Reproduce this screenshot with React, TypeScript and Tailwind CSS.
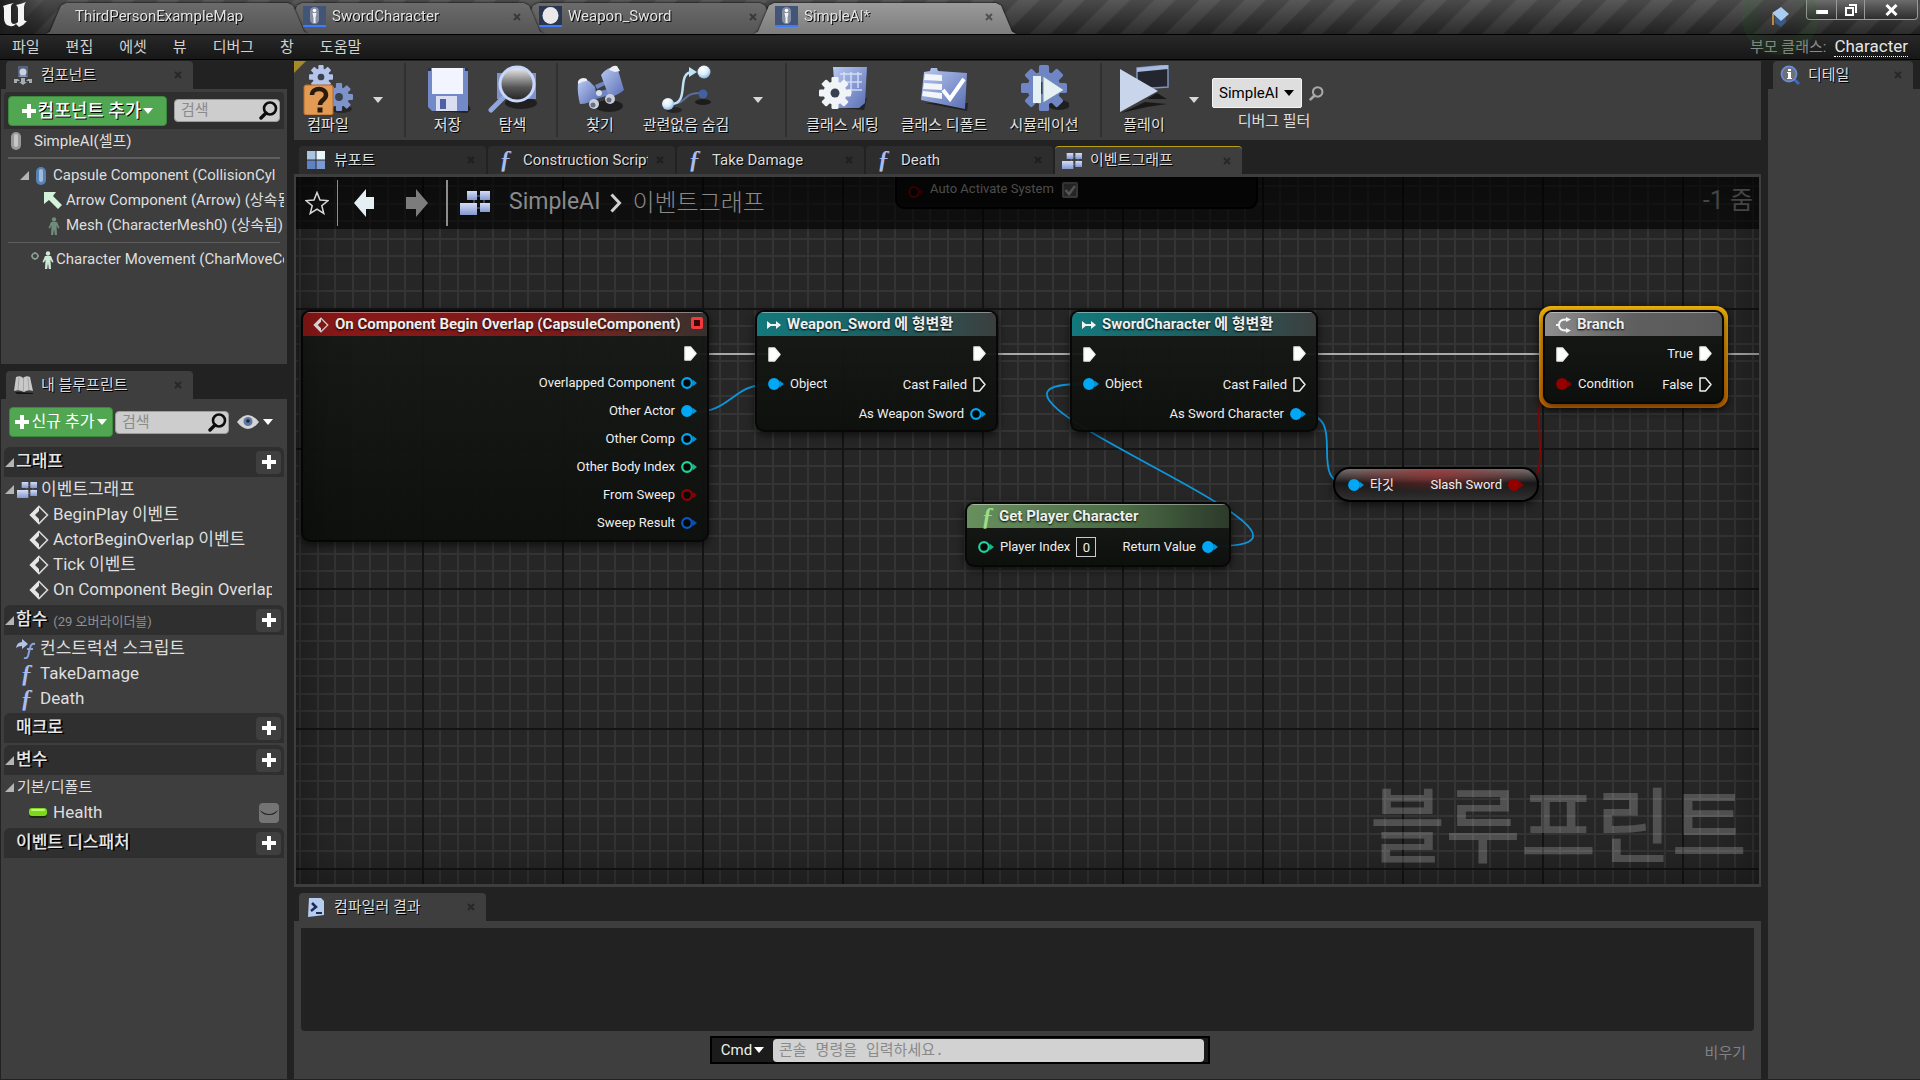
import React from 'react';

type PinKind = 'exec' | 'object' | 'int' | 'bool' | 'struct';

interface PinData {
  label?: string;
  kind: PinKind;
  linked?: boolean;
}

const pinColors: Record<PinKind, string> = {
  exec: '#ffffff',
  object: '#00a8f6',
  int: '#1fd19b',
  bool: '#940000',
  struct: '#0a58c8',
};

/* ---------- small glyphs ---------- */

const CloseMark = () => (
  <svg width="8" height="8" viewBox="0 0 8 8" className="shrink-0">
    <path d="M1 1l6 6M7 1L1 7" stroke="#101010" strokeOpacity="0.5" strokeWidth="1.800" />
  </svg>
);

const Caret = ({ color = '#d8d8d8', size = 10 }: { color?: string; size?: number }) => (
  <svg width={size} height={size * 0.6} viewBox="0 0 10 6" className="shrink-0">
    <path d="M0 0h10L5 6z" fill={color} />
  </svg>
);

const TreeArrow = () => (
  <svg width="9" height="9" viewBox="0 0 9 9" className="shrink-0">
    <path d="M9 0v9H0z" fill="#b4b4b4" />
  </svg>
);

const Plus = ({ size = 14 }: { size?: number }) => (
  <svg width={size} height={size} viewBox="0 0 14 14" className="shrink-0">
    <path d="M5 0h4v5h5v4H9v5H5V9H0V5h5z" fill="#fff" />
  </svg>
);

const Magnifier = ({ color = '#0d0d0d', size = 19 }: { color?: string; size?: number }) => (
  <svg width={size} height={size} viewBox="0 0 19 19" className="shrink-0">
    <circle cx="11" cy="7.5" r="6" fill="none" stroke={color} strokeWidth="2.6" />
    <path d="M7 12l-5 5" stroke={color} strokeWidth="3.4" strokeLinecap="round" />
  </svg>
);

const FuncGlyph = ({ className = 'text-[#a9bdf2]' }: { className?: string }) => (
  <span
    aria-hidden="true"
    className={`w-5 shrink-0 text-center font-['Liberation_Serif',serif] text-[25px] leading-5 italic [text-shadow:1px_0_0_currentColor] ${className}`}
  >
    ƒ
  </span>
);

const GraphGlyph = ({ width = 20 }: { width?: number }) => (
  <svg width={width} height={width * 0.8} viewBox="0 0 30 24" className="shrink-0">
    <defs>
      <linearGradient id="graphFill" x1="0" y1="0" x2="0" y2="1">
        <stop offset="0" stopColor="#d5ddf6" />
        <stop offset="1" stopColor="#8497cf" />
      </linearGradient>
    </defs>
    <path d="M17 5h3M24 9v4M14 9v3M16 17h4" stroke="#6f7894" />
    <rect x="7" y="0" width="10" height="9" fill="url(#graphFill)" />
    <rect x="20" y="0" width="10" height="9" fill="url(#graphFill)" />
    <rect x="0" y="12" width="17" height="12" fill="url(#graphFill)" />
    <rect x="20" y="12" width="10" height="9" fill="url(#graphFill)" />
  </svg>
);

const EventGlyph = ({ size = 20 }: { size?: number }) => (
  <svg width={size} height={size} viewBox="0 0 20 20" className="shrink-0">
    <path d="M10 1.5l8.5 8.5-8.5 8.5L1.5 10z" fill="none" stroke="#d6d6d6" strokeWidth="1.6" />
    <path d="M10 1v5l-4 4 4 4v5L1 10z" fill="#e6e6e6" />
  </svg>
);

const CapsuleGlyph = ({ color = '#b9b9b9' }: { color?: string }) => (
  <svg width="12" height="20" viewBox="0 0 12 20" className="shrink-0">
    <rect x="1" y="1" width="10" height="18" rx="5" fill={color} fillOpacity="0.75" />
    <rect x="4" y="3" width="4" height="13" rx="2" fill="#fff" fillOpacity="0.45" />
  </svg>
);

const PersonGlyph = ({ color }: { color: string }) => (
  <svg width="12" height="18" viewBox="0 0 12 18" className="shrink-0">
    <circle cx="6" cy="2.5" r="2.2" fill={color} />
    <path d="M3 5h6l2.5 6-1.4.6L8.5 8.5 9 18H6.8L6 12l-.8 6H3l.5-9.5-1.6 3.1L.5 11z" fill={color} />
  </svg>
);

const AssetBadge = ({ round = false }: { round?: boolean }) => (
  <svg width="23" height="21" viewBox="0 0 23 21" className="shrink-0">
    <rect width="23" height="19" fill={round ? '#2a3550' : '#435577'} />
    <rect y="19" width="23" height="2" fill="#3d7bff" />
    {round ? (
      <ellipse cx="11.5" cy="9.5" rx="8" ry="8.5" fill="#e9e9e9" />
    ) : (
      <>
        <rect x="7" y="1" width="9" height="17" rx="4.5" fill="#8790a2" />
        <circle cx="11.5" cy="4.5" r="1.8" fill="#fff" />
        <path d="M9.500 7h4l-1 5v5h-2v-5z" fill="#f2f2f2" />
      </>
    )}
  </svg>
);

const Gear = ({ cx, cy, r, fill }: { cx: number; cy: number; r: number; fill: string }) => (
  <g transform={`translate(${cx} ${cy}) scale(${r / 10})`}>
    {[0, 45, 90, 135].map((a) => (
      <rect key={a} x="-2.2" y="-10" width="4.4" height="20" rx="0.8" fill={fill} transform={`rotate(${a})`} />
    ))}
    <circle r="7.2" fill={fill} />
    <circle r="2.8" fill="#39414f" />
  </g>
);

/* ---------- toolbar drawings ---------- */

const BlueFill = ({ id }: { id: string }) => (
  <defs>
    <linearGradient id={id} x1="0" y1="0" x2="1" y2="1">
      <stop offset="0" stopColor="#b9c9f3" />
      <stop offset="1" stopColor="#5a6fb4" />
    </linearGradient>
  </defs>
);

const CompileIcon = () => (
  <svg width="50" height="50" viewBox="0 0 50 50">
    <ellipse cx="38" cy="44" rx="11" ry="4" fill="#000" fillOpacity="0.4" />
    <Gear cx={18} cy={12} r={12} fill="#b4c4ea" />
    <Gear cx={36} cy={32} r={14} fill="#7f93cb" />
    <rect x="1" y="20" width="29" height="30" rx="2" fill="#e39a55" />
    <rect x="1" y="20" width="29" height="30" rx="2" fill="none" stroke="#b06a28" />
    <path d="M9 30c0-8 14-8 14 0 0 5-6 5-6 10" fill="none" stroke="#2a1a0c" strokeWidth="4.5" />
    <rect x="14.5" y="42.500" width="5" height="5" fill="#2a1a0c" />
  </svg>
);

const SaveIcon = () => (
  <svg width="50" height="50" viewBox="0 0 50 50">
    <path d="M8 46l36 2 4-4-4-6z" fill="#000" fillOpacity="0.45" />
    <path d="M5 3h40v43H9l-4-4z" fill="#7489c8" />
    <rect x="9" y="3" width="31" height="26" fill="#f2f5ff" />
    <path d="M13 31h21v15H13z" fill="#d9def0" />
    <rect x="17" y="34" width="6" height="10" fill="#4d61a4" />
    <path d="M5 3h3v3H5zM42 3h3v3h-3z" fill="#26304f" />
  </svg>
);

const BrowseIcon = () => (
  <svg width="50" height="50" viewBox="0 0 50 50">
    <defs>
      <linearGradient id="lensFill" x1="0" y1="0" x2="0" y2="1">
        <stop offset="0" stopColor="#f2f2f2" />
        <stop offset="0.6" stopColor="#555" />
        <stop offset="1" stopColor="#222" />
      </linearGradient>
    </defs>
    <ellipse cx="33" cy="38" rx="16" ry="6" fill="#000" fillOpacity="0.5" />
    <rect x="9" y="8" width="39" height="26" fill="#7d92cc" />
    <path d="M15 33L3 45" stroke="#8fa6e0" strokeWidth="5" strokeLinecap="round" />
    <circle cx="29" cy="19" r="17" fill="url(#lensFill)" stroke="#c9d8fa" strokeWidth="3" />
  </svg>
);

const FindIcon = () => (
  <svg width="50" height="50" viewBox="0 0 50 50">
    <BlueFill id="findFill" />
    <ellipse cx="34" cy="41" rx="14" ry="6" fill="#000" fillOpacity="0.5" />
    <path d="M20 20l12-5v4l-10 5zM20 27l14-3v6l-13 4z" fill="#6f84c2" />
    <path d="M3 17q5-4 11-1l6 6 2 11q-8 6-17 6Q2 28 3 17z" fill="url(#findFill)" />
    <path d="M26 10q4-6 12-8l5 3 6 20q-7 6-15 7z" fill="url(#findFill)" />
    <path d="M3 19q-1-5 5-6 5 0 4 3-4 0-9 3zM34 5q3-5 8-4l3 5-5 1z" fill="#eceff6" />
    <circle cx="19" cy="39" r="5" fill="#c9cfdc" />
    <circle cx="18" cy="40" r="2.500" fill="#6a7083" />
    <circle cx="35" cy="34" r="5" fill="#c9cfdc" />
    <circle cx="34" cy="35" r="2.500" fill="#6a7083" />
    <circle cx="24" cy="28" r="3" fill="#d5dcec" />
  </svg>
);

const HideIcon = () => (
  <svg width="50" height="50" viewBox="0 0 50 50">
    <defs>
      <radialGradient id="ballFill" cx="0.4" cy="0.3" r="0.8">
        <stop offset="0" stopColor="#fff" />
        <stop offset="0.5" stopColor="#dbeefa" />
        <stop offset="1" stopColor="#6f9fdc" />
      </radialGradient>
    </defs>
    <ellipse cx="42" cy="37" rx="8" ry="3" fill="#000" fillOpacity="0.55" />
    <ellipse cx="13" cy="45" rx="8" ry="3" fill="#000" fillOpacity="0.4" />
    <path d="M10 39c16 0 12-11 28-11" fill="none" stroke="#5b7099" strokeWidth="2" />
    <path d="M10 39c20 0 4-32 22-32" fill="none" stroke="#bfe3f5" strokeWidth="2.500" />
    <path d="M28 2l8 5-8 5z" fill="#bfe3f5" />
    <circle cx="7" cy="39" r="6" fill="url(#ballFill)" />
    <circle cx="43" cy="7" r="6.500" fill="url(#ballFill)" />
    <circle cx="42" cy="29" r="4.500" fill="#4460a4" />
  </svg>
);

const ClassSettingsIcon = () => (
  <svg width="50" height="50" viewBox="0 0 50 50">
    <BlueFill id="settingsFill" />
    <path d="M22 43l24 2 3-12z" fill="#000" fillOpacity="0.45" />
    <path d="M15 2h34l-2 36-6 5H18z" fill="url(#settingsFill)" />
    <path d="M26 7v20M33 7v22M40 7v16M22 9h22M28 17h16M30 25h14" stroke="#e3ebfd" strokeOpacity="0.8" strokeWidth="1.500" />
    <Gear cx={17} cy={28} r={16} fill="#f1f4f7" />
  </svg>
);

const ClassDefaultsIcon = () => (
  <svg width="50" height="50" viewBox="0 0 50 50">
    <BlueFill id="defaultsFill" />
    <path d="M6 38l42 8 1-8z" fill="#000" fillOpacity="0.45" />
    <path d="M5 7l6-1 1-3h6l1 3 29 2-2 36L2 35z" fill="url(#defaultsFill)" />
    <path d="M6 9l17 1v6L5 15zM5 18l18 1v6L4 24zM4 26l19 2v6L3 31z" fill="#f4f5f8" />
    <path d="M24 25l7 9 14-20" fill="none" stroke="#fff" strokeWidth="4" />
  </svg>
);

const SimulateIcon = () => (
  <svg width="50" height="50" viewBox="0 0 50 50">
    <ellipse cx="40" cy="40" rx="11" ry="5" fill="#000" fillOpacity="0.5" />
    <Gear cx={25} cy={23} r={23} fill="#7086c4" />
    <rect x="14" y="11" width="8" height="27" fill="#e4f0f2" />
    <path d="M24 11l21 14-21 13z" fill="#e4f0f2" stroke="#6f8fb0" />
  </svg>
);

const PlayIcon = () => (
  <svg width="50" height="50" viewBox="0 0 50 50">
    <path d="M2 48l26-6 20-3-22-2zM28 34l20 0-10-6z" fill="#000" fillOpacity="0.6" />
    <path d="M18 3l31-3v22l-31 2z" fill="#23262e" stroke="#7f94bd" strokeWidth="1.500" />
    <path d="M18 3l31-3v4L18 7z" fill="#a9bbe0" />
    <path d="M1 4l38 22L1 47z" fill="#c9d5ea" />
  </svg>
);

/* ---------- generic parts ---------- */

interface PanelTabProps {
  icon: React.ReactNode;
  label: string;
  active?: boolean;
  highlight?: boolean;
}

const PanelTab: React.FC<PanelTabProps> = ({ icon, label, active = true, highlight = false }) => (
  <button
    type="button"
    className={`flex h-7 w-[187px] shrink-0 items-center gap-2 rounded-t-sm px-[7px] text-left text-[15px] text-[#dcdcdc] [text-shadow:1px_1px_0_#000] ${
      active ? 'bg-[#3e3e3e]' : 'bg-[#2d2d2d]'
    } ${highlight ? 'border-t border-[#b99f18]' : ''}`}
  >
    <span className="flex w-5 shrink-0 justify-center">{icon}</span>
    <span className="grow overflow-hidden whitespace-nowrap">{label}</span>
    <span className="mr-1">
      <CloseMark />
    </span>
  </button>
);

const SearchBox = ({ id, label }: { id: string; label: string }) => (
  <label
    htmlFor={id}
    className="flex h-[23px] min-w-0 flex-1 items-center rounded-sm border border-[#9c9c9c] bg-[#cdcdcd] pr-px pl-1.5"
  >
    <input
      id={id}
      type="text"
      aria-label={label}
      placeholder="검색"
      className="w-full min-w-0 bg-transparent text-[15px] text-[#222] outline-none placeholder:text-[#8b8b8b]"
    />
    <Magnifier />
  </label>
);

const ToolButton = ({ icon, label, width }: { icon: React.ReactNode; label: string; width: string }) => (
  <button type="button" className={`flex shrink-0 flex-col items-center pt-1 whitespace-nowrap ${width}`}>
    {icon}
    <span className="text-[15px] leading-5 text-[#e2e2e2] [text-shadow:1px_1px_0_#000]">{label}</span>
  </button>
);

const ToolDivider = () => <div className="mt-0.5 h-[74px] w-0.5 shrink-0 bg-[#303030]" />;

const ToolCaret = ({ label }: { label: string }) => (
  <button type="button" aria-label={label} className="flex h-[78px] w-6 shrink-0 items-center justify-center">
    <Caret />
  </button>
);

/* ---------- title bar ---------- */

interface WindowTabProps {
  label: string;
  icon?: React.ReactNode;
  layer: string;
  active?: boolean;
}

const WindowTab: React.FC<WindowTabProps> = ({ label, icon, layer, active = false }) => (
  <div className={`relative mt-[3px] -mr-[26px] h-[31px] w-[262px] drop-shadow-[0_0_1px_#000] ${layer}`}>
    <button
      type="button"
      className={`flex h-full w-full items-center gap-1.5 bg-linear-to-b pb-1 text-left text-[15px] text-[#e4e4e4] [text-shadow:1px_1px_0_#000] [clip-path:polygon(0_100%,4px_92%,15px_8%,20px_0,242px_0,247px_8%,258px_92%,100%_100%)] ${
        active ? 'from-[#9a9a9a] to-[#7d7d7d]' : 'from-[#6b6b6b] to-[#555555]'
      } ${icon ? 'pl-[21px]' : 'pl-[29px]'}`}
    >
      {icon}
      <span className="grow">{label}</span>
      {icon && (
        <span className="mr-[23px]">
          <CloseMark />
        </span>
      )}
    </button>
  </div>
);

const TitleBar = () => (
  <header className="relative flex h-[34px] shrink-0 items-start bg-[#2e2e2e] bg-[linear-gradient(to_bottom,rgba(255,255,255,0.14),rgba(0,0,0,0.25)),repeating-linear-gradient(135deg,#2c2c2c_0px,#2c2c2c_15px,#3c3c3c_17px,#3c3c3c_30px,#2c2c2c_32px)]">
    <div className="flex h-full w-[46px] items-start bg-linear-to-r from-[#1c1c1c] to-transparent">
      <svg width="30" height="32" viewBox="0 0 30 32">
        <path
          d="M3 6q5-2 11-3-3 1-3 4v13q0 4 3 4 2 0 4-2V9q0-3-2-4 5-1 10-3-2 2-2 5v12q0 2 3 2-3 4-8 6l-3-3q-3 3-6 2-6-1-6-8V10q0-3-1-4z"
          fill="#f4f4f4"
        />
      </svg>
    </div>
    <nav aria-label="문서 탭" className="flex grow">
      <WindowTab label="ThirdPersonExampleMap" layer="z-[3]" />
      <WindowTab label="SwordCharacter" icon={<AssetBadge />} layer="z-[2]" />
      <WindowTab label="Weapon_Sword" icon={<AssetBadge round />} layer="z-[1]" />
      <WindowTab label="SimpleAI*" icon={<AssetBadge />} layer="z-[4]" active />
    </nav>
    <div className="mt-1.5 mr-4 size-5">
      <svg width="20" height="22" viewBox="0 0 20 22">
        <path d="M5 11v6l6 4 5-5v-5z" fill="#3a5a86" />
        <path d="M2 7l9-6 8 7-8 7z" fill="#a9cdf0" />
        <path d="M3 8v11" stroke="#b98a45" strokeWidth="2" />
      </svg>
    </div>
    <div className="mr-0.5 flex h-5 overflow-hidden rounded-b-sm border border-t-0 border-[#9a9a9a] bg-linear-to-b from-[#6c6c6c] to-[#2e2e2e]">
      <button type="button" aria-label="최소화" className="flex w-[30px] items-center justify-center border-r border-[#9a9a9a]">
        <svg width="12" height="12" viewBox="0 0 12 12">
          <rect y="6" width="12" height="4" fill="#fff" />
        </svg>
      </button>
      <button type="button" aria-label="복원" className="flex w-[28px] items-center justify-center border-r border-[#9a9a9a]">
        <svg width="14" height="14" viewBox="0 0 14 14">
          <path d="M5 1h8v9h-2V3H5z" fill="#fff" />
          <rect x="2" y="5" width="7" height="7" fill="none" stroke="#fff" strokeWidth="2" />
        </svg>
      </button>
      <button type="button" aria-label="닫기" className="flex w-[52px] items-center justify-center">
        <svg width="13" height="12" viewBox="0 0 13 12">
          <path d="M1.500 1l10 10M11.500 1l-10 10" stroke="#fff" strokeWidth="3" />
        </svg>
      </button>
    </div>
    {/* tutorial pulse around the cap icon */}
    <div className="pointer-events-none absolute -top-[21px] right-[102px] z-10 size-[76px] rounded-full bg-[radial-gradient(circle,transparent_30%,rgba(30,110,30,0.28)_100%)]" />
  </header>
);

const menuItems = ['파일', '편집', '에셋', '뷰', '디버그', '창', '도움말'];

const MenuBar = () => (
  <div className="flex h-[26px] shrink-0 items-center border-y border-black bg-linear-to-b from-[#282828] to-[#171717] pr-3 pl-3 text-[15px] text-[#d2d2d2]">
    <nav aria-label="메뉴" className="flex grow gap-[26px]">
      {menuItems.map((item) => (
        <button key={item} type="button">
          {item}
        </button>
      ))}
    </nav>
    <span className="mr-2 text-[#8b8b8b]">부모 클래스:</span>
    <a href="#character" className="border-b border-dotted border-white text-[17px] leading-[19px] text-[#e6e6e6]">
      Character
    </a>
  </div>
);

/* ---------- left column ---------- */

const ComponentsPanel = () => (
  <section>
    <div className="pl-[5px]">
      <PanelTab
        label="컴포넌트"
        icon={
          <svg width="18" height="19" viewBox="0 0 18 19">
            <rect x="4" y="0" width="10" height="11" fill="#56657f" />
            <circle cx="9" cy="6" r="3.500" fill="#c9d2e2" />
            <path d="M5 11l1-2h6l1 2z" fill="#8d98ab" />
            <path d="M0 13h4l2 2H3v2H0zM18 13h-4l-2 2h3v2h3zM7 12h4v4h2l-4 3-4-3h2z" fill="#a7abb2" />
          </svg>
        }
      />
    </div>
    <div className="h-[275px] overflow-hidden bg-[#3e3e3e] px-[3px] pt-[3px] text-[15px] text-[#dedede]">
      <div className="flex h-[37px] items-center gap-[7px] rounded-t bg-[#2f2f2f] px-1">
        <button
          type="button"
          className="flex h-[30px] w-[159px] items-center justify-center gap-0.5 rounded-sm border border-[#3b8a3b] bg-[#51a751] text-[18px] font-medium whitespace-nowrap text-white [text-shadow:1px_1px_0_#000]"
        >
          <Plus />
          컴포넌트 추가
          <Caret color="#fff" />
        </button>
        <SearchBox id="component-search" label="컴포넌트 검색" />
      </div>
      <ul className="whitespace-nowrap">
        <li className="flex h-6 items-center gap-3 pl-1.5">
          <CapsuleGlyph />
          <span>SimpleAI(셀프)</span>
        </li>
        <li aria-hidden="true" className="mx-1 my-1 h-0.5 bg-[#5e5e5e]" />
        <li className="flex h-[25px] items-center gap-1.5 overflow-hidden pl-4">
          <TreeArrow />
          <CapsuleGlyph color="#5f9be0" />
          <span>Capsule Component (CollisionCyl</span>
        </li>
        <li className="flex h-[25px] items-center gap-1 overflow-hidden pl-[40px]">
          <svg width="18" height="18" viewBox="0 0 18 18" className="shrink-0">
            <path d="M0 0h12L9 4l9 9-4 4-9-9-5 4z" fill="#d3f3d8" />
          </svg>
          <span>Arrow Component (Arrow) (상속됨)</span>
        </li>
        <li className="flex h-[25px] items-center gap-1.5 overflow-hidden pl-[44px]">
          <PersonGlyph color="#6f8c7b" />
          <span>Mesh (CharacterMesh0) (상속됨)</span>
        </li>
        <li aria-hidden="true" className="mx-1 my-1 h-px bg-[#5e5e5e]" />
        <li className="flex h-[25px] items-center gap-0.5 overflow-hidden pl-[26px]">
          <svg width="10" height="18" viewBox="0 0 10 18" className="shrink-0">
            <circle cx="5" cy="5" r="2.800" fill="none" stroke="#8d9b90" strokeWidth="1.500" />
            <path d="M5 1v1.500M5 7.500V9M1 5h1.500M7.500 5H9" stroke="#8d9b90" strokeWidth="1.500" />
          </svg>
          <PersonGlyph color="#cfe9d6" />
          <span className="overflow-hidden">Character Movement (CharMoveComp)</span>
        </li>
      </ul>
    </div>
  </section>
);

const SectionHeader: React.FC<{ title: string; note?: string; open?: boolean }> = ({ title, note, open = true }) => (
  <div className="flex h-[30px] items-center rounded-t-md bg-[#2f2f2f] pr-[3px] pl-px">
    <span className="w-[10px]">{open && <TreeArrow />}</span>
    <h2 className="ml-px text-[17px] font-medium text-[#e6e6e6] [text-shadow:2px_1px_0_#000]">{title}</h2>
    {note && <span className="ml-1.5 pt-1 text-[13px] text-[#8f8f8f]">{note}</span>}
    <button
      type="button"
      aria-label={`${title} 추가`}
      className="ml-auto flex h-[23px] w-[25px] items-center justify-center rounded-sm bg-[#3f3f3f]"
    >
      <Plus />
    </button>
  </div>
);

const events = ['BeginPlay 이벤트', 'ActorBeginOverlap 이벤트', 'Tick 이벤트', 'On Component Begin Overlap'];

const BlueprintPanel = () => (
  <section className="mt-[7px] flex min-h-0 flex-1 flex-col">
    <div className="pl-[5px]">
      <PanelTab
        label="내 블루프린트"
        icon={
          <svg width="19" height="18" viewBox="0 0 19 18">
            <path d="M1 16l18 1v1H3z" fill="#111" />
            <path d="M0 15L2 1q5-2 7 1 3-3 7-1l3 14q-5-2-9 1-5-3-10-1z" fill="#c9c9c9" />
            <path d="M9.500 2v13M5 2L4 14M14 2l1 12" stroke="#a5a5a5" />
          </svg>
        }
      />
    </div>
    <div className="flex-1 overflow-hidden bg-[#3e3e3e] px-[3px] pt-2 text-[17px] text-[#dedede]">
      <div className="flex h-[30px] items-center gap-0.5 px-[5px]">
        <button
          type="button"
          className="flex h-[30px] w-[104px] items-center justify-center gap-[3px] rounded-sm border border-[#3b8a3b] bg-[#51a751] text-[16px] whitespace-nowrap text-white"
        >
          <Plus />
          신규 추가
          <Caret color="#fff" />
        </button>
        <SearchBox id="blueprint-search" label="블루프린트 검색" />
        <button type="button" aria-label="보기 옵션" className="ml-1.5 flex w-[42px] items-center gap-1">
          <svg width="22" height="14" viewBox="0 0 22 14">
            <path d="M0 7q11-14 22 0-11 14-22 0z" fill="#d4d4d4" />
            <circle cx="11" cy="6.500" r="4.500" fill="#5f77a8" />
            <circle cx="11" cy="6" r="1.800" fill="#1e2738" />
          </svg>
          <Caret color="#fff" />
        </button>
      </div>

      <div className="mt-2.5">
        <SectionHeader title="그래프" />
        <ul className="whitespace-nowrap">
          <li className="flex h-[25px] items-center gap-0.5 pl-px">
            <TreeArrow />
            <span className="ml-px">
              <GraphGlyph />
            </span>
            <span className="ml-0.5">이벤트그래프</span>
          </li>
          {events.map((name) => (
            <li key={name} className="flex h-[25px] items-center gap-1 overflow-hidden pr-3 pl-[25px]">
              <EventGlyph />
              <span className="overflow-hidden">{name}</span>
            </li>
          ))}
        </ul>
      </div>

      <div className="mt-[3px]">
        <SectionHeader title="함수" note="(29 오버라이더블)" />
        <ul className="pt-px pb-[2px] whitespace-nowrap">
          <li className="flex h-[25px] items-center gap-1 pl-3">
            <svg width="20" height="20" viewBox="0 0 20 20" className="shrink-0">
              <path d="M0 9q1-6 6-6V0l6 5-6 5V7q-4 0-6 2z" fill="#b5c3ea" />
              <path d="M19 5q-4-1-5 4l-2 8q-1 3-4 2M11 10h6" fill="none" stroke="#8da4e0" strokeWidth="2" />
            </svg>
            컨스트럭션 스크립트
          </li>
          <li className="flex h-[25px] items-center gap-1 pl-3">
            <FuncGlyph />
            TakeDamage
          </li>
          <li className="flex h-[25px] items-center gap-1 pl-3">
            <FuncGlyph />
            Death
          </li>
        </ul>
      </div>

      <SectionHeader title="매크로" open={false} />
      <div className="mt-0.5">
        <SectionHeader title="변수" />
        <ul className="pb-[3px] whitespace-nowrap">
          <li className="flex h-[25px] items-center gap-[3px] pl-px text-[15px]">
            <TreeArrow />
            기본/디폴트
          </li>
          <li className="flex h-[25px] items-center gap-1.5 pr-[5px] pl-[25px]">
            <svg width="18" height="10" viewBox="0 0 18 10" className="shrink-0">
              <rect y="3" width="18" height="7" rx="3" fill="#1d2b10" />
              <rect width="18" height="8" rx="3" fill="#7fd61f" />
              <rect x="2" y="1" width="14" height="2" rx="1" fill="#c1f57c" />
            </svg>
            Health
            <button
              type="button"
              aria-label="Health 표시"
              className="ml-auto flex size-5 items-center justify-center rounded-sm bg-[#747474]"
            >
              <svg width="18" height="6" viewBox="0 0 18 6">
                <path d="M0 0q9 8 18 0-2 5-9 5T0 0z" fill="#222" />
              </svg>
            </button>
          </li>
        </ul>
      </div>
      <SectionHeader title="이벤트 디스패처" open={false} />
    </div>
  </section>
);

/* ---------- main toolbar ---------- */

const MainToolbar = () => (
  <div className="relative flex h-[79px] shrink-0 bg-[#3e3e3e] pl-[7px]">
    <svg width="12" height="12" viewBox="0 0 12 12" className="absolute top-0 left-0">
      <path d="M0 0h12L0 12z" fill="#a58a28" />
    </svg>
    <ToolButton icon={<CompileIcon />} label="컴파일" width="w-[54px]" />
    <div className="pl-[11px]">
      <ToolCaret label="컴파일 옵션" />
    </div>
    <div className="w-[14px]" />
    <ToolDivider />
    <div className="flex pl-[9px]">
      <ToolButton icon={<SaveIcon />} label="저장" width="w-[65px]" />
      <ToolButton icon={<BrowseIcon />} label="탐색" width="w-[65px]" />
    </div>
    <div className="w-[11px]" />
    <ToolDivider />
    <div className="flex pl-[9px]">
      <ToolButton icon={<FindIcon />} label="찾기" width="w-[66px]" />
      <ToolButton icon={<HideIcon />} label="관련없음 숨김" width="w-[106px]" />
      <div className="pl-[7px]">
        <ToolCaret label="숨김 옵션" />
      </div>
    </div>
    <div className="w-[15px]" />
    <ToolDivider />
    <div className="flex pl-[5px]">
      <ToolButton icon={<ClassSettingsIcon />} label="클래스 세팅" width="w-[101px]" />
      <ToolButton icon={<ClassDefaultsIcon />} label="클래스 디폴트" width="w-[102px]" />
      <ToolButton icon={<SimulateIcon />} label="시뮬레이션" width="w-[98px]" />
    </div>
    <div className="w-[7px]" />
    <ToolDivider />
    <div className="flex pl-4">
      <ToolButton icon={<PlayIcon />} label="플레이" width="w-[52px]" />
      <div className="pl-3">
        <ToolCaret label="플레이 옵션" />
      </div>
    </div>
    <div className="flex flex-col pt-[17px] pl-1.5">
      <div className="flex items-center gap-[7px]">
        <div className="relative">
          <select
            aria-label="디버그 필터"
            className="h-[30px] w-[90px] appearance-none rounded-xs border border-[#f4f4f4] bg-[#dedede] pl-1.5 text-[15px] text-black"
          >
            <option>SimpleAI</option>
          </select>
          <span className="pointer-events-none absolute top-0 right-2 flex h-full items-center">
            <Caret color="#000" />
          </span>
        </div>
        <Magnifier color="#a8a8a8" size={15} />
      </div>
      <span className="mt-[3px] pl-3 text-center text-[15px] leading-5 text-[#dcdcdc]">디버그 필터</span>
    </div>
  </div>
);

/* ---------- graph ---------- */

const ExecPin = ({ linked }: { linked?: boolean }) => (
  <svg width="13" height="15" viewBox="0 0 13 15" className="shrink-0">
    <path
      d="M1 1h5.500L12 7.500 6.500 14H1z"
      fill={linked ? '#fff' : 'none'}
      stroke="#f0f0f0"
      strokeWidth="1.500"
      strokeLinejoin="round"
    />
  </svg>
);

const DataPin = ({ kind, linked }: { kind: PinKind; linked?: boolean }) => {
  const color = pinColors[kind];
  return (
    <svg width="16" height="12" viewBox="0 0 16 12" className="shrink-0">
      <circle cx="6" cy="6" r="4.800" fill={linked ? color : '#050805'} stroke={color} strokeWidth="2.200" />
      <path d="M11.500 2.500L16 6l-4.500 3.500z" fill={color} fillOpacity="0.85" />
    </svg>
  );
};

const Pin = ({ pin, side }: { pin: PinData; side: 'in' | 'out' }) => (
  <div className={`flex h-full items-center gap-1.5 ${side === 'out' ? 'flex-row-reverse' : ''}`}>
    {pin.kind === 'exec' ? <ExecPin linked={pin.linked} /> : <DataPin kind={pin.kind} linked={pin.linked} />}
    {pin.label && <span>{pin.label}</span>}
  </div>
);

interface NodeProps {
  place: string;
  header: string;
  icon: React.ReactNode;
  title: string;
  inputs?: PinData[];
  outputs?: PinData[];
  badge?: boolean;
  children?: React.ReactNode;
}

const GraphNode: React.FC<NodeProps> = ({ place, header, icon, title, inputs = [], outputs = [], badge, children }) => (
  <article
    className={`absolute overflow-hidden rounded-[9px] border-2 border-[#060706] bg-linear-to-b from-[#181a17]/95 to-[#0c0f0c]/95 text-[13px] whitespace-nowrap text-[#efefef] shadow-[0_3px_8px_rgba(0,0,0,0.6)] ${place}`}
  >
    <div className={`flex h-6 items-center gap-1.5 border-t border-white/40 pl-2.5 ${header}`}>
      {icon}
      <h3 className="text-[15px] font-bold text-[#eee] [text-shadow:0_1px_2px_#000]">{title}</h3>
      {badge && <span className="mr-1 mb-1 ml-auto size-3 rounded-xs border-3 border-[#f23a3a] bg-[#3a0505]" />}
    </div>
    {children ?? (
      <div className="flex justify-between py-0.5 pr-2.5 pl-[11px]">
        <div>
          {inputs.map((pin, i) => (
            <div key={i} className={pin.kind === 'exec' ? 'h-8' : 'h-7'}>
              <Pin pin={pin} side="in" />
            </div>
          ))}
        </div>
        <div>
          {outputs.map((pin, i) => (
            <div key={i} className={pin.kind === 'exec' ? 'h-[31px]' : 'h-7'}>
              <Pin pin={pin} side="out" />
            </div>
          ))}
        </div>
      </div>
    )}
  </article>
);

const CastGlyph = () => (
  <svg width="14" height="10" viewBox="0 0 14 10" className="shrink-0">
    <path d="M0 1l5 4-5 4zM4 4h5V1l5 4-5 4V6H4z" fill="#f2f2f2" />
  </svg>
);

const BranchGlyph = () => (
  <svg width="16" height="16" viewBox="0 0 16 16" className="shrink-0">
    <path d="M1 8h4M12 2.500Q4 2 4 8t8 5.500" fill="none" stroke="#f4f4f4" strokeWidth="2" />
    <path d="M11 0l5 2.500L11 5zM11 11l5 2.500L11 16z" fill="#f4f4f4" />
  </svg>
);

// 8 cells per major line, 140px between major lines
const minorSteps = [17, 35, 52, 70, 87, 105, 122];

const GridAndWires = () => (
  <svg className="absolute inset-0 size-full">
    <defs>
      <pattern id="grid" x="126" y="131" width="140" height="140" patternUnits="userSpaceOnUse">
        {minorSteps.map((s) => (
          <path key={s} d={`M${s} 0h2v140h-2zM0 ${s}h140v2H0z`} fill="#343434" />
        ))}
        <path d="M0 0h2v140H0zM0 0h140v2H0z" fill="#141414" />
      </pattern>
    </defs>
    <rect width="100%" height="100%" fill="url(#grid)" />
    {/* wires use window coordinates */}
    <g transform="translate(-296 -177)" fill="none">
      <path d="M695 354h75M983 354h102M1303 354h255M1710 354h260" stroke="#a9a9a9" strokeWidth="2" />
      <g stroke="#0d96dc" strokeWidth="1.800">
        <path d="M694 412C732 412 732 384 770 384" />
        <path d="M1218 546C1380 546 920 384 1082 384" />
        <path d="M1302 414C1352 414 1302 485 1352 485" />
      </g>
      <path d="M1519 485C1565 485 1515 384 1558 384" stroke="#850505" strokeWidth="1.800" />
    </g>
  </svg>
);

const GraphCanvas = () => (
  <div className="relative min-h-0 flex-1 overflow-hidden border-x-2 border-y-3 border-[#3e3e3e] bg-[#262626]">
    <GridAndWires />

    <div className="absolute -top-10 left-[599px] h-[72px] w-[363px] rounded-[9px] border-2 border-black bg-[#0e100e] text-[13px] text-[#dadada]">
      <label className="flex h-full items-end gap-1.5 pb-[9px] pl-[11px]">
        <DataPin kind="bool" />
        Auto Activate System
        <span className="relative ml-0.5 flex size-4">
          <input
            type="checkbox"
            defaultChecked
            className="size-4 appearance-none rounded-xs border-2 border-[#9a9a9a] bg-[#6a6a6a]"
          />
          <svg width="16" height="16" viewBox="0 0 16 16" className="pointer-events-none absolute inset-0">
            <path d="M3.500 8l3.500 4 6-8" fill="none" stroke="#f2f2f2" strokeWidth="2.500" />
          </svg>
        </span>
      </label>
    </div>

    <GraphNode
      place="left-[5px] top-[133px] w-[408px] h-[232px]"
      header="bg-linear-to-r from-[#8c1717] via-[#7c1b1b] via-65% to-[#36302e]"
      icon={<EventGlyph size={16} />}
      title="On Component Begin Overlap (CapsuleComponent)"
      badge
      outputs={[
        { kind: 'exec', linked: true },
        { kind: 'object', label: 'Overlapped Component' },
        { kind: 'object', label: 'Other Actor', linked: true },
        { kind: 'object', label: 'Other Comp' },
        { kind: 'int', label: 'Other Body Index' },
        { kind: 'bool', label: 'From Sweep' },
        { kind: 'struct', label: 'Sweep Result' },
      ]}
    />
    <GraphNode
      place="left-[459px] top-[133px] w-[243px] h-[122px]"
      header="bg-linear-to-r from-[#12797c] via-[#1d5a5c] via-60% to-[#3a3f3e]"
      icon={<CastGlyph />}
      title="Weapon_Sword 에 형변환"
      inputs={[
        { kind: 'exec', linked: true },
        { kind: 'object', label: 'Object', linked: true },
      ]}
      outputs={[
        { kind: 'exec', linked: true },
        { kind: 'exec', label: 'Cast Failed' },
        { kind: 'object', label: 'As Weapon Sword' },
      ]}
    />
    <GraphNode
      place="left-[774px] top-[133px] w-[248px] h-[122px]"
      header="bg-linear-to-r from-[#12797c] via-[#1d5a5c] via-60% to-[#3a3f3e]"
      icon={<CastGlyph />}
      title="SwordCharacter 에 형변환"
      inputs={[
        { kind: 'exec', linked: true },
        { kind: 'object', label: 'Object', linked: true },
      ]}
      outputs={[
        { kind: 'exec', linked: true },
        { kind: 'exec', label: 'Cast Failed' },
        { kind: 'object', label: 'As Sword Character', linked: true },
      ]}
    />
    <GraphNode
      place="left-[669px] top-[325px] w-[266px] h-[65px]"
      header="bg-linear-to-r from-[#688f5e] via-[#4b6b45] via-60% to-[#2c3a2a]"
      icon={<FuncGlyph className="-mr-1 text-[#9be089]" />}
      title="Get Player Character"
    >
      <div className="flex items-center justify-between px-[11px] pt-[9px]">
        <label className="flex items-center gap-1.5">
          <DataPin kind="int" />
          Player Index
          <input
            type="text"
            defaultValue="0"
            className="size-5 border border-[#c9c9c9] bg-transparent text-center text-[13px] outline-none"
          />
        </label>
        <Pin pin={{ kind: 'object', label: 'Return Value', linked: true }} side="out" />
      </div>
    </GraphNode>
    <div className="absolute top-[129px] left-[1243px] h-[102px] w-[189px] rounded-xl bg-linear-to-b from-[#f3b50c] to-[#cf6d00] shadow-[0_2px_8px_rgba(0,0,0,0.6)]">
      <GraphNode
        place="inset-1 bg-[#11130f]"
        header="bg-linear-to-r from-[#8f8f8f] via-[#5f5f5f] via-50% to-[#5a5a5a]"
        icon={<BranchGlyph />}
        title="Branch"
        inputs={[
          { kind: 'exec', linked: true },
          { kind: 'bool', label: 'Condition', linked: true },
        ]}
        outputs={[
          { kind: 'exec', label: 'True', linked: true },
          { kind: 'exec', label: 'False' },
        ]}
      />
    </div>
    <article className="absolute top-[290px] left-[1037px] flex h-[35px] w-[206px] items-center justify-between rounded-[17px] border-2 border-black bg-[#191717] bg-[radial-gradient(ellipse_50%_60%_at_50%_15%,rgba(160,50,50,0.75),transparent),linear-gradient(to_bottom,rgba(255,255,255,0.4),transparent_45%,rgba(255,255,255,0.1))] px-[13px] text-[13px] text-[#efefef] shadow-[0_3px_8px_rgba(0,0,0,0.6)]">
      <Pin pin={{ kind: 'object', label: '타깃', linked: true }} side="in" />
      <Pin pin={{ kind: 'bool', label: 'Slash Sword', linked: true }} side="out" />
    </article>

    <div className="pointer-events-none absolute inset-0 shadow-[inset_0_0_50px_rgba(0,0,0,0.45)]" />
    <div className="pointer-events-none absolute right-3 bottom-0 text-[82px] leading-[112px] font-medium text-white/20">
      블루프린트
    </div>

    <div className="absolute inset-x-0 top-0 flex h-[52px] items-center bg-black/60 pb-px pl-[9px]">
      <button type="button" aria-label="즐겨찾기">
        <svg width="24" height="24" viewBox="0 0 24 24">
          <path d="M12 1.500l3 7.500 8 .6-6.200 5.100 2 7.800L12 18.200 5.200 22.500l2-7.800L1 9.600 9 9z" fill="none" stroke="#d8d8d8" strokeWidth="1.500" />
        </svg>
      </button>
      <div className="mx-2 h-[46px] w-px bg-[#8d8d8d]" />
      <button type="button" aria-label="뒤로" className="ml-2">
        <svg width="20" height="28" viewBox="0 0 20 28">
          <path d="M0 14L12 0v8h8v12h-8v8z" fill="#e3eff2" />
        </svg>
      </button>
      <button type="button" aria-label="앞으로" className="ml-8">
        <svg width="22" height="28" viewBox="0 0 22 28">
          <path d="M22 14L10 0v8H0v12h10v8z" fill="#7c7c7c" />
        </svg>
      </button>
      <div className="mr-3 ml-[18px] h-[46px] w-0.5 bg-[#8d8d8d]" />
      <GraphGlyph width={30} />
      <div className="ml-[19px] flex items-center gap-2.5 text-[23px] text-[#8a8a8a]">
        <span>SimpleAI</span>
        <svg width="12" height="20" viewBox="0 0 12 20">
          <path d="M1.500 1.500l8 8.500-8 8.500" fill="none" stroke="#d0d0d0" strokeWidth="3" />
        </svg>
        <span className="text-[24px] font-light">이벤트그래프</span>
      </div>
      <span className="mr-1.5 ml-auto pb-1 text-[25px] text-[#444]">-1 줌</span>
    </div>
  </div>
);

const ViewportGlyph = () => (
  <svg width="18" height="18" viewBox="0 0 18 18">
    <rect width="8.500" height="8.500" fill="#a9c4e0" />
    <rect x="9.500" width="8.500" height="8.500" fill="#e9f6fa" />
    <rect y="9.500" width="8.500" height="8.500" fill="#5f82c4" />
    <rect x="9.500" y="9.500" width="8.500" height="8.500" fill="#7b9ad2" />
  </svg>
);

const CompilerResults = () => (
  <section className="mt-1.5 flex h-[186px] shrink-0 flex-col">
    <div className="pl-[5px]">
      <PanelTab
        label="컴파일러 결과"
        icon={
          <svg width="18" height="19" viewBox="0 0 18 19">
            <path d="M2 0h12l3 3v14L1 19z" fill="#b7cdf0" />
            <path d="M5 5l4 4-5 4" fill="none" stroke="#1d2c58" strokeWidth="2.500" />
            <path d="M9 15h6" stroke="#1d2c58" strokeWidth="2" />
          </svg>
        }
      />
    </div>
    <div className="flex flex-1 flex-col bg-[#3e3e3e] px-[7px] pt-[7px]">
      <div className="h-[103px] rounded-b bg-[#222222]" />
      <button type="button" className="mt-[11px] mr-2 self-end text-[15px] text-[#828282]">
        비우기
      </button>
    </div>
  </section>
);

const ConsoleBar = () => (
  <div className="absolute bottom-4 left-1/2 flex h-7 w-[500px] -translate-x-1/2 items-center border-2 border-black bg-[#1b1b1b] pr-1">
    <button type="button" className="flex w-[61px] items-center justify-center gap-0.5 text-[15px] text-[#eee]">
      Cmd
      <Caret color="#fff" />
    </button>
    <input
      type="text"
      aria-label="콘솔 명령"
      placeholder="콘솔 명령을 입력하세요."
      className="h-[23px] min-w-0 flex-1 rounded bg-[#d2d2d2] px-1.5 text-[15px] text-[#222] outline-none placeholder:font-['Liberation_Mono','Noto_Sans_CJK_KR',monospace] placeholder:text-[#8a8a8a]"
    />
  </div>
);

const App: React.FC = () => (
  <div className="relative flex h-screen flex-col overflow-hidden bg-[#222222] font-['Roboto','Noto_Sans_CJK_KR',sans-serif]">
    <TitleBar />
    <MenuBar />
    <main className="flex min-h-0 flex-1 gap-[7px] pt-px pb-px pl-px">
      <aside className="flex w-[286px] shrink-0 flex-col">
        <ComponentsPanel />
        <BlueprintPanel />
      </aside>
      <div className="flex min-w-0 flex-1 flex-col">
        <MainToolbar />
        <div className="mt-1.5 flex gap-0.5 pl-[5px]">
          <PanelTab label="뷰포트" icon={<ViewportGlyph />} active={false} />
          <PanelTab label="Construction Script" icon={<FuncGlyph />} active={false} />
          <PanelTab label="Take Damage" icon={<FuncGlyph />} active={false} />
          <PanelTab label="Death" icon={<FuncGlyph />} active={false} />
          <PanelTab label="이벤트그래프" icon={<GraphGlyph />} highlight />
        </div>
        <GraphCanvas />
        <CompilerResults />
      </div>
      <aside className="flex w-[152px] shrink-0 flex-col">
        <div className="flex pr-[7px] pl-[5px]">
          <button
            type="button"
            className="flex h-7 flex-1 items-center gap-2 rounded-t-sm bg-[#3e3e3e] px-[7px] text-left text-[15px] text-[#dcdcdc] [text-shadow:1px_1px_0_#000]"
          >
            <svg width="20" height="20" viewBox="0 0 20 20" className="shrink-0">
              <path d="M13 13l6 6" stroke="#3f66c4" strokeWidth="3" />
              <circle cx="9" cy="9" r="7.500" fill="#6d7076" stroke="#6a8ad6" strokeWidth="1.800" />
              <path d="M8 4h3v2H8zM7 7h4v6h1v1H7v-1h1V8H7z" fill="#fff" />
            </svg>
            <span className="grow">디테일</span>
            <span className="mr-1">
              <CloseMark />
            </span>
          </button>
        </div>
        <div className="flex-1 bg-[#3e3e3e]" />
      </aside>
    </main>
    <ConsoleBar />
  </div>
);

export default App;
